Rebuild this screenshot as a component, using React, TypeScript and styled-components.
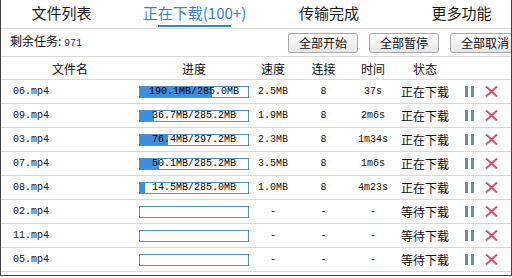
import React from "react";
import styled, { createGlobalStyle } from "styled-components";

const Global = createGlobalStyle`
  html, body { margin: 0; padding: 0; background: #fff; }
  body { font-family: "Noto Sans CJK SC", "Noto Sans", sans-serif; color: #111; }
  * { box-sizing: border-box; }
`;

const Frame = styled.div`
  width: 512px;
  height: 276px;
  border: 1px solid #444;
  border-top: none;
  background: #fff;
  overflow: hidden;
  display: flex;
  flex-direction: column;
`;

const TabBar = styled.div`
  height: 29px;
  flex: 0 0 29px;
  display: flex;
  border-bottom: 1px solid #dcdcdc;
  overflow: hidden;
`;

const Tab = styled.div<{ $w: number; $active?: boolean }>`
  flex: 0 0 ${(p) => p.$w}px;
  display: flex;
  flex-direction: column;
  align-items: center;
  padding-top: 3px;
  font-size: 15px;
  line-height: 20px;
  color: ${(p) => (p.$active ? "#3a7fcf" : "#1a1a1a")};
`;

const TabLine = styled.div`
  width: 73px;
  height: 2px;
  margin-top: 2px;
  background: #3a82d2;
`;

const Toolbar = styled.div`
  height: 28px;
  flex: 0 0 28px;
  display: flex;
  align-items: center;
  padding-left: 9px;
  border-bottom: 1px solid #dcdcdc;
  overflow: hidden;
`;

const Remain = styled.div`
  flex: 0 0 278px;
  font-size: 12px;
  line-height: 16px;
  white-space: nowrap;
`;

const Count = styled.span`
  font-family: "Liberation Mono", monospace;
  font-size: 10px;
  color: #1b1b8f;
`;

const Buttons = styled.div`
  display: flex;
  gap: 11px;
  flex-shrink: 0;
`;

const Btn = styled.button`
  width: 70px;
  height: 20px;
  padding: 0;
  border: 1px solid #a8a8a8;
  border-radius: 3px;
  background: linear-gradient(#ffffff, #e6e6e6);
  font-family: "Noto Sans CJK SC", sans-serif;
  font-size: 12px;
  line-height: 18px;
  color: #111;
  flex-shrink: 0;
`;

const cols = "138px 110px 48px 53px 46px 58px 1fr";

const HeaderRow = styled.div`
  height: 23px;
  flex: 0 0 23px;
  display: grid;
  grid-template-columns: ${cols};
  align-items: center;
  border-bottom: 1px solid #dcdcdc;
  font-size: 12px;
  text-align: center;
`;

const Row = styled.div`
  height: 24px;
  flex: 0 0 24px;
  display: grid;
  grid-template-columns: ${cols};
  align-items: center;
  border-bottom: 1px solid #d8d8d8;
  font-family: "Liberation Mono", monospace;
  font-size: 10px;
  text-align: center;
`;

const Name = styled.div`
  text-align: left;
  padding-left: 12px;
`;

const Bar = styled.div`
  position: relative;
  height: 12px;
  border: 1px solid #5b8fc0;
  background: #fff;
  display: flex;
  align-items: center;
  justify-content: center;
  overflow: hidden;
`;

const Fill = styled.div`
  position: absolute;
  left: 0;
  top: 0;
  bottom: 0;
  background: #3b8fde;
`;

const BarText = styled.span`
  position: relative;
  line-height: 10px;
  color: #000;
`;

const Status = styled.div`
  font-family: "Noto Sans CJK SC", sans-serif;
  font-size: 12px;
`;

const Actions = styled.div`
  display: flex;
  align-items: center;
  padding-left: 11px;
  gap: 11px;
`;

const Pause = () => (
  <svg width="9" height="11" viewBox="0 0 9 11">
    <rect x="0" y="0" width="3" height="11" fill="#6d8cab" />
    <rect x="6" y="0" width="3" height="11" fill="#6d8cab" />
  </svg>
);

const Close = () => (
  <svg width="13" height="11" viewBox="0 0 13 11">
    <path d="M1 0.5 L12 10.5 M12 0.5 L1 10.5" stroke="#e0506e" strokeWidth="2" />
  </svg>
);

type Item = {
  name: string;
  done?: number;
  total?: number;
  text?: string;
  speed: string;
  conn: string;
  time: string;
  status: string;
};

const items: Item[] = [
  { name: "06.mp4", done: 190.1, total: 285.0, text: "190.1MB/285.0MB", speed: "2.5MB", conn: "8", time: "37s", status: "正在下载" },
  { name: "09.mp4", done: 36.7, total: 285.2, text: "36.7MB/285.2MB", speed: "1.9MB", conn: "8", time: "2m6s", status: "正在下载" },
  { name: "03.mp4", done: 76.4, total: 297.2, text: "76.4MB/297.2MB", speed: "2.3MB", conn: "8", time: "1m34s", status: "正在下载" },
  { name: "07.mp4", done: 50.1, total: 285.2, text: "50.1MB/285.2MB", speed: "3.5MB", conn: "8", time: "1m6s", status: "正在下载" },
  { name: "08.mp4", done: 14.5, total: 285.0, text: "14.5MB/285.0MB", speed: "1.0MB", conn: "8", time: "4m23s", status: "正在下载" },
  { name: "02.mp4", speed: "-", conn: "-", time: "-", status: "等待下载" },
  { name: "11.mp4", speed: "-", conn: "-", time: "-", status: "等待下载" },
  { name: "05.mp4", speed: "-", conn: "-", time: "-", status: "等待下载" },
];

export default function App() {
  return (
    <>
      <Global />
      <Frame>
        <TabBar>
          <Tab $w={121}>文件列表</Tab>
          <Tab $w={145} $active>
            正在下载(100+)
            <TabLine />
          </Tab>
          <Tab $w={124}>传输完成</Tab>
          <Tab $w={141}>更多功能</Tab>
        </TabBar>
        <Toolbar>
          <Remain>
            剩余任务: <Count>971</Count>
          </Remain>
          <Buttons>
            <Btn>全部开始</Btn>
            <Btn>全部暂停</Btn>
            <Btn>全部取消</Btn>
          </Buttons>
        </Toolbar>
        <HeaderRow>
          <div>文件名</div>
          <div>进度</div>
          <div>速度</div>
          <div>连接</div>
          <div>时间</div>
          <div>状态</div>
          <div />
        </HeaderRow>
        {items.map((it) => (
          <Row key={it.name}>
            <Name>{it.name}</Name>
            <Bar>
              {it.done !== undefined && it.total ? (
                <>
                  <Fill style={{ width: `${(it.done / it.total) * 100}%` }} />
                  <BarText>{it.text}</BarText>
                </>
              ) : null}
            </Bar>
            <div>{it.speed}</div>
            <div>{it.conn}</div>
            <div>{it.time}</div>
            <Status>{it.status}</Status>
            <Actions>
              <Pause />
              <Close />
            </Actions>
          </Row>
        ))}
      </Frame>
    </>
  );
}
